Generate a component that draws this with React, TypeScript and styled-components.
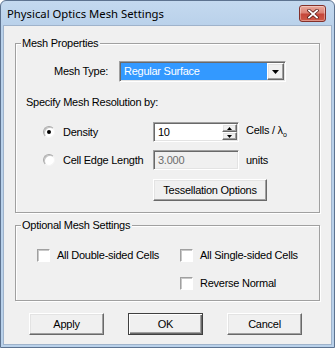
import React from "react";
import styled, { createGlobalStyle } from "styled-components";

const GlobalStyle = createGlobalStyle`
  html, body {
    margin: 0;
    padding: 0;
    background: #ffffff;
  }
  body {
    font-family: "Liberation Sans", Arial, sans-serif;
    font-size: 11px;
    letter-spacing: -0.25px;
    color: #000000;
  }
  * {
    box-sizing: border-box;
  }
`;

const Window = styled.div`
  width: 335px;
  height: 348px;
  display: flex;
  flex-direction: column;
  padding: 0 3px 3px;
  background: linear-gradient(#c4d9ef, #b9d1ea 26px);
  border: 1px solid #5d7390;
  border-radius: 6px 6px 0 0;
`;

const TitleBar = styled.div`
  height: 25px;
  flex: none;
  display: flex;
  align-items: flex-start;
  justify-content: space-between;
`;

const Title = styled.span`
  font-family: "Noto Sans", "Open Sans", sans-serif;
  font-size: 11.3px;
  letter-spacing: normal;
  line-height: 16px;
  margin: 5px 0 0 3px;
`;

const CloseButton = styled.div`
  width: 27px;
  height: 17px;
  margin: 4px 5px 0 0;
  display: flex;
  align-items: center;
  justify-content: center;
  border: 1px solid #83302a;
  border-radius: 3px;
  background: linear-gradient(#e9a99d 0%, #dc8376 45%, #c5473a 55%, #cf5a48 100%);
  box-shadow: inset 0 0 0 1px rgba(255, 255, 255, 0.35);
`;

const Client = styled.div`
  flex: 1;
  display: flex;
  flex-direction: column;
  padding: 11px 11px 0;
  background: #f0f0f0;
  box-shadow: 0 0 0 1px #9fb3cb;
`;

const Group = styled.fieldset<{ $bottom: number; $top?: number }>`
  margin: ${({ $top }) => $top ?? 0}px 0 0;
  padding: 0 0 ${({ $bottom }) => $bottom}px;
  min-width: 0;
  border: 1px solid #a0a0a0;
  box-shadow: inset 1px 1px 0 #ffffff, 1px 1px 0 #ffffff;
`;

const Legend = styled.legend`
  margin-left: 5px;
  padding: 0 2px 0 1px;
  line-height: 13px;
  background: #f0f0f0;
`;

const Row = styled.div<{ $top: number; $left: number }>`
  display: flex;
  align-items: center;
  margin: ${({ $top }) => $top}px 0 0 ${({ $left }) => $left}px;
`;

const FieldLabel = styled.span<{ $width: number }>`
  width: ${({ $width }) => $width}px;
  line-height: 13px;
`;

const Text = styled.span`
  line-height: 13px;
`;

const sunken = `
  border: 1px solid;
  border-color: #a0a0a0 #ffffff #ffffff #a0a0a0;
  box-shadow: inset 1px 1px 0 #696969, inset -1px -1px 0 #e3e3e3;
  padding: 1px;
`;

const raised = `
  border: 1px solid;
  border-color: #ffffff #696969 #696969 #ffffff;
  box-shadow: inset -1px -1px 0 #a0a0a0, inset 1px 1px 0 #e3e3e3;
  background: #f0f0f0;
`;

const Combo = styled.div`
  width: 167px;
  height: 21px;
  display: flex;
  background: #ffffff;
  ${sunken}
`;

const ComboValue = styled.div`
  flex: 1;
  background: #3399ff;
  color: #ffffff;
  line-height: 17px;
  padding-left: 3px;
`;

const DropButton = styled.div`
  width: 17px;
  display: flex;
  align-items: center;
  justify-content: center;
  ${raised}
`;

const Option = styled.label`
  width: 110px;
  display: flex;
  align-items: center;
  gap: 8px;
`;

const Radio = styled.span<{ $checked?: boolean }>`
  width: 12px;
  height: 12px;
  border-radius: 50%;
  background: #ffffff;
  border: 1px solid;
  border-color: #a8a8a8 #f4f4f4 #f4f4f4 #a8a8a8;
  box-shadow: inset 1px 1px 0 #c4c4c4;
  display: flex;
  align-items: center;
  justify-content: center;

  &::after {
    content: "";
    width: 4px;
    height: 4px;
    border-radius: 50%;
    background: #000000;
    display: ${({ $checked }) => ($checked ? "block" : "none")};
  }
`;

const Edit = styled.div<{ $disabled?: boolean }>`
  width: 86px;
  height: 20px;
  display: flex;
  background: ${({ $disabled }) => ($disabled ? "#f0f0f0" : "#ffffff")};
  color: ${({ $disabled }) => ($disabled ? "#6d6d6d" : "#000000")};
  ${sunken}
`;

const EditValue = styled.span`
  flex: 1;
  line-height: 16px;
  padding-left: 3px;
`;

const Spin = styled.div`
  width: 15px;
  display: flex;
  flex-direction: column;
`;

const SpinButton = styled.div`
  flex: 1;
  display: flex;
  align-items: center;
  justify-content: center;
  ${raised}
`;

const Unit = styled.span`
  margin-left: 7px;
  line-height: 13px;
`;

const Sub = styled.sub`
  font-size: 7px;
  vertical-align: -3px;
`;

const PushButton = styled.div<{ $width: number; $default?: boolean }>`
  width: ${({ $width }) => $width}px;
  height: 22px;
  display: flex;
  align-items: center;
  justify-content: center;
  ${raised}
  ${({ $default }) =>
    $default &&
    `
    border-color: #404040;
    box-shadow: inset 1px 1px 0 #ffffff, inset -1px -1px 0 #696969, inset -2px -2px 0 #a0a0a0;
  `}
`;

const CheckGrid = styled.div`
  display: grid;
  grid-template-columns: 143px auto;
  row-gap: 15px;
  margin: 17px 0 0 21px;
`;

const Check = styled.label<{ $column?: number }>`
  grid-column: ${({ $column }) => $column ?? "auto"};
  display: flex;
  align-items: center;
  gap: 7px;
  line-height: 13px;
`;

const CheckBox = styled.span`
  width: 13px;
  height: 13px;
  background: #ffffff;
  border: 1px solid;
  border-color: #a0a0a0 #ffffff #ffffff #a0a0a0;
  box-shadow: inset 1px 1px 0 #c8c8c8;
`;

const ButtonRow = styled.div`
  display: flex;
  gap: 24px;
  margin: 12px 0 0 14px;
`;

function Arrow({ up, w = 7, h = 4 }: { up?: boolean; w?: number; h?: number }) {
  return (
    <svg width={w} height={h} viewBox={`0 0 ${w} ${h}`}>
      <polygon
        points={up ? `${w / 2},0 ${w},${h} 0,${h}` : `0,0 ${w},0 ${w / 2},${h}`}
        fill="#000"
      />
    </svg>
  );
}

export default function App() {
  return (
    <>
      <GlobalStyle />
      <Window>
        <TitleBar>
          <Title>Physical Optics Mesh Settings</Title>
          <CloseButton>
            <svg width="12" height="10" viewBox="0 0 12 10">
              <path d="M2 1.5 L10 8.5 M10 1.5 L2 8.5" stroke="#5a1d18" strokeWidth="3.4" strokeLinecap="square" />
              <path d="M2 1.5 L10 8.5 M10 1.5 L2 8.5" stroke="#ffffff" strokeWidth="1.8" strokeLinecap="square" />
            </svg>
          </CloseButton>
        </TitleBar>
        <Client>
          <Group $bottom={11}>
            <Legend>Mesh Properties</Legend>
            <Row $top={11} $left={38}>
              <FieldLabel $width={65}>Mesh Type:</FieldLabel>
              <Combo>
                <ComboValue>Regular Surface</ComboValue>
                <DropButton>
                  <Arrow />
                </DropButton>
              </Combo>
            </Row>
            <Row $top={14} $left={10}>
              <Text>Specify Mesh Resolution by:</Text>
            </Row>
            <Row $top={13} $left={27}>
              <Option>
                <Radio $checked />
                <Text>Density</Text>
              </Option>
              <Edit>
                <EditValue>10</EditValue>
                <Spin>
                  <SpinButton>
                    <Arrow up w={5} h={3} />
                  </SpinButton>
                  <SpinButton>
                    <Arrow w={5} h={3} />
                  </SpinButton>
                </Spin>
              </Edit>
              <Unit>
                Cells / λ<Sub>o</Sub>
              </Unit>
            </Row>
            <Row $top={8} $left={27}>
              <Option>
                <Radio />
                <Text>Cell Edge Length</Text>
              </Option>
              <Edit $disabled>
                <EditValue>3.000</EditValue>
              </Edit>
              <Unit>units</Unit>
            </Row>
            <Row $top={9} $left={137}>
              <PushButton $width={114}>Tessellation Options</PushButton>
            </Row>
          </Group>
          <Group $bottom={10} $top={6}>
            <Legend>Optional Mesh Settings</Legend>
            <CheckGrid>
              <Check>
                <CheckBox />
                All Double-sided Cells
              </Check>
              <Check>
                <CheckBox />
                All Single-sided Cells
              </Check>
              <Check $column={2}>
                <CheckBox />
                Reverse Normal
              </Check>
            </CheckGrid>
          </Group>
          <ButtonRow>
            <PushButton $width={75}>Apply</PushButton>
            <PushButton $width={75} $default>
              OK
            </PushButton>
            <PushButton $width={75}>Cancel</PushButton>
          </ButtonRow>
        </Client>
      </Window>
    </>
  );
}
